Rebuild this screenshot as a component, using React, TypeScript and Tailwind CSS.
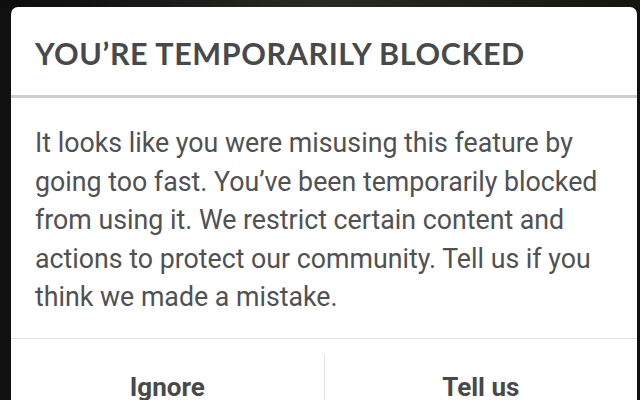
import React from "react";

const lines = [
  "It looks like you were misusing this feature by",
  "going too fast. You\u2019ve been temporarily blocked",
  "from using it. We restrict certain content and",
  "actions to protect our community. Tell us if you",
  "think we made a mistake.",
];

export default function App() {
  return (
    <div className="relative h-[400px] w-[640px] overflow-hidden bg-[#101110]">
      <div className="absolute left-0 top-0 h-[8px] w-full bg-gradient-to-r from-[#0c0d0c] via-[#2a2b25] to-[#15160f]" />
      <div className="relative ml-[11px] mt-[7px] w-[626px] rounded-t-[7px] bg-white">
        <div className="pl-[24px] pt-[28px] pb-[24px]">
          <h1
            className="whitespace-nowrap text-[30.5px] font-bold leading-[36px] tracking-[0.6px] text-[#48494b]"
            style={{ fontFamily: "Lato, 'Open Sans', sans-serif" }}
          >
            YOU{"\u2019"}RE TEMPORARILY BLOCKED
          </h1>
        </div>
        <div className="h-[3px] w-full bg-[#cdcdcd]" />
        <div
          className="pl-[24px] pt-[26px] pb-[21px] text-[26.75px] leading-[38.5px] text-[#505153]"
          style={{ fontFamily: "Roboto, 'Liberation Sans', sans-serif" }}
        >
          {lines.map((l) => (
            <div key={l} className="whitespace-nowrap">
              {l}
            </div>
          ))}
        </div>
        <div className="h-px w-full bg-[#e2e2e2]" />
        <div
          className="flex h-[62px] text-[26px] font-bold leading-[30px] text-[#48494b]"
          style={{ fontFamily: "Roboto, 'Liberation Sans', sans-serif" }}
        >
          <div className="flex-1 pt-[33px] text-center">Ignore</div>
          <div className="mt-[15px] w-px bg-[#e2e2e2]" />
          <div className="flex-1 pt-[33px] text-center">Tell us</div>
        </div>
      </div>
    </div>
  );
}
